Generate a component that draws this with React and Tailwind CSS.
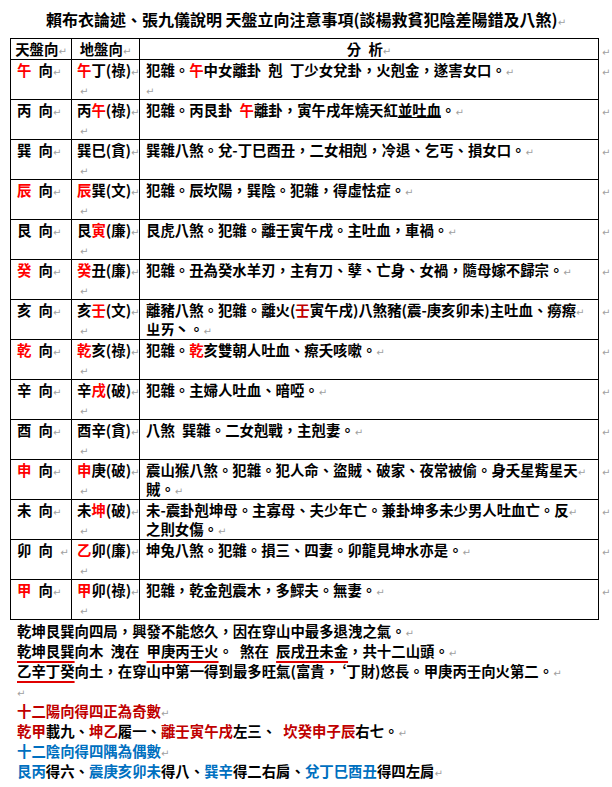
import React from "react";

const R = "text-[#ff0000]";
const DR = "text-[#c00000]";
const BL = "text-[#0070c0]";

// paragraph mark like in the word doc
const Mark = ({ className = "" }) => (
  <span
    className={`text-[10px] leading-[0px] font-normal text-[#a0a0a0] ${className}`}
    style={{ fontFamily: "'DejaVu Sans', sans-serif" }}
  >
    ↵
  </span>
);

const SP = "\u2002";

const rows = [
  {
    a: [["午", R], SP + "向"],
    b: [["午", R], "丁(祿)"],
    c: ["犯雜。", ["午", R], "中女離卦" + SP + "剋" + SP + "丁少女兌卦，火剋金，遂害女口。"],
    cMark: true,
  },
  {
    a: ["丙" + SP + "向"],
    b: ["丙", ["午", R], "(祿)"],
    c: ["犯雜。丙艮卦" + SP, ["午", R], "離卦，寅午戌年燒天紅", ["並吐血", "underline"], "。"],
  },
  {
    a: ["巽" + SP + "向"],
    b: ["巽巳(貪)"],
    c: ["巽雜八煞。兌-丁巳酉丑，二女相剋，冷退、乞丐、損女口。"],
  },
  {
    a: [["辰", R], SP + "向"],
    b: [["辰", R], "巽(文)"],
    c: ["犯雜。辰坎陽，巽陰。犯雜，得虛怯症。"],
  },
  {
    a: ["艮" + SP + "向"],
    b: ["艮", ["寅", R], "(廉)"],
    c: ["艮虎八煞。犯雜。離壬寅午戌。主吐血，車禍。"],
  },
  {
    a: [["癸", R], SP + "向"],
    b: [["癸", R], "丑(廉)"],
    c: ["犯雜。丑為癸水羊刃，主有刀、孽、亡身、女禍，隨母嫁不歸宗。"],
  },
  {
    a: ["亥" + SP + "向"],
    b: ["亥", ["壬", R], "(文)"],
    c: ["離豬八煞。犯雜。離火(", ["壬", DR], "寅午戌)八煞豬(震-庚亥卯未)主吐血、癆瘵"],
    c2: ["ㄓㄞ丶。"],
  },
  {
    a: [["乾", R], SP + "向"],
    b: [["乾", R], "亥(祿)"],
    c: ["犯雜。", ["乾", R], "亥雙朝人吐血、瘵夭咳嗽。"],
  },
  {
    a: ["辛" + SP + "向"],
    b: ["辛", ["戌", R], "(破)"],
    c: ["犯雜。主婦人吐血、暗啞。"],
  },
  {
    a: ["酉" + SP + "向"],
    b: ["酉辛(貪)"],
    c: ["八煞" + SP + "巽雜。二女剋戰，主剋妻。"],
  },
  {
    a: [["申", R], SP + "向"],
    b: [["申", R], "庚(破)"],
    c: ["震山猴八煞。犯雜。犯人命、盜賊、破家、夜常被偷。身夭星觜星天"],
    c2: ["賊。"],
  },
  {
    a: ["未" + SP + "向"],
    b: ["未", ["坤", R], "(破)"],
    c: ["未-震卦剋坤母。主寡母、夫少年亡。兼卦坤多未少男人吐血亡。反"],
    c2: ["之則女傷。"],
  },
  {
    a: ["卯" + SP + "向" + SP],
    b: [["乙", R], "卯(廉)"],
    c: ["坤兔八煞。犯雜。損三、四妻。卯龍見坤水亦是。"],
  },
  {
    a: [["甲", R], SP + "向"],
    b: [["甲", R], "卯(祿)"],
    c: ["犯雜，乾金剋震木，多鰥夫。無妻。"],
  },
];

const Parts = ({ parts }) =>
  parts.map((p, i) =>
    typeof p === "string" ? (
      <span key={i}>{p}</span>
    ) : (
      <span key={i} className={p[1]}>
        {p[0]}
      </span>
    )
  );

const cell = "border border-black align-top p-0";
const redLine = "underline decoration-[#e00000] decoration-2 underline-offset-[4px]";

export default function App() {
  return (
    <div
      className="w-[612px] h-[787px] bg-white text-black overflow-hidden"
      style={{ fontFamily: "'Noto Sans CJK TC', 'Liberation Sans', sans-serif" }}
    >
      <div className="pt-[9px] h-[38px] text-center text-[16px] leading-[20px] font-bold">
        賴布衣論述、張九儀說明 天盤立向注意事項(談楊救貧犯陰差陽錯及八煞)
        <Mark />
      </div>

      <div className="flex">
        <table className="ml-[10px] w-[589px] border-collapse table-fixed text-[14.4px] leading-[19.5px] font-bold">
          <colgroup>
            <col className="w-[61px]" />
            <col className="w-[68px]" />
            <col />
          </colgroup>
          <tbody>
            <tr className="h-[20px]">
              <td className={`${cell} text-center`}>
                天盤向
                <Mark />
              </td>
              <td className={`${cell} text-center`}>
                地盤向
                <Mark />
              </td>
              <td className={`${cell} text-center`}>
                {"分" + SP + "析"}
                <Mark />
              </td>
            </tr>
            {rows.map((r, i) => (
              <tr key={i} className="h-[40px]">
                <td className={`${cell} pl-[6px] whitespace-pre`}>
                  <Parts parts={r.a} />
                  <Mark />
                </td>
                <td className={`${cell} pl-[5px] whitespace-nowrap`}>
                  <div>
                    <Parts parts={r.b} />
                    <Mark />
                  </div>
                  <div>
                    <Mark className="ml-[3px]" />
                  </div>
                </td>
                <td className={`${cell} pl-[6px] pr-0`}>
                  {r.c2 ? (
                    <>
                      <div className="whitespace-nowrap">
                        <Parts parts={r.c} />
                        <Mark />
                      </div>
                      <div>
                        <Parts parts={r.c2} />
                        <Mark />
                      </div>
                    </>
                  ) : (
                    <div>
                      <Parts parts={r.c} />
                      <Mark />
                    </div>
                  )}
                  {r.cMark && (
                    <div>
                      <Mark />
                    </div>
                  )}
                </td>
              </tr>
            ))}
          </tbody>
        </table>
        <div className="flex flex-col pl-[3px] pt-[1px]">
          <div className="h-[20px] leading-[20px]">
            <Mark />
          </div>
          {rows.map((_, i) => (
            <div key={i} className="h-[40px] leading-[20px]">
              <Mark />
            </div>
          ))}
        </div>
      </div>

      <div className="pl-[17px] pt-[1px] text-[14.4px] leading-[20px] font-bold">
        <div>
          乾坤艮巽向四局，興發不能悠久，因在穿山中最多退洩之氣。
          <Mark />
        </div>
        <div>
          <span className={redLine}>乾坤艮巽</span>
          {"向木" + SP + "洩在" + SP}
          <span className={redLine}>甲庚丙壬火</span>
          {"。" + SP + "煞在" + SP}
          <span className={redLine}>辰戌丑未金</span>
          ，共十二山頭。
          <Mark />
        </div>
        <div>
          <span className={redLine}>乙辛丁癸</span>
          向土，在穿山中第一得到最多旺氣(富貴，‘丁財)悠長。甲庚丙壬向火第二。
          <Mark />
        </div>
        <div>
          <Mark />
        </div>
        <div className={DR}>
          十二陽向得四正為奇數
          <Mark />
        </div>
        <div>
          <span className={DR}>乾甲</span>載九、<span className={DR}>坤乙</span>履一、
          <span className={DR}>離壬寅午戌</span>
          {"左三、" + SP}
          <span className={DR}>坎癸申子辰</span>右七。
          <Mark />
        </div>
        <div className={BL}>
          十二陰向得四隅為偶數
          <Mark />
        </div>
        <div>
          <span className={BL}>艮丙</span>得六、<span className={BL}>震庚亥卯未</span>得八、
          <span className={BL}>巽辛</span>得二右肩、<span className={BL}>兌丁巳酉丑</span>得四左肩
          <Mark />
        </div>
      </div>
    </div>
  );
}
